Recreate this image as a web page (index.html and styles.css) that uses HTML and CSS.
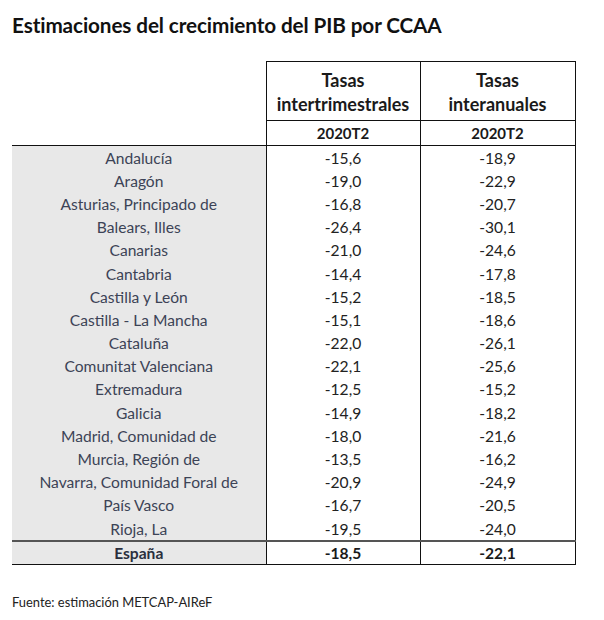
FILE: index.html
```html
<!DOCTYPE html>
<html>
<head>
<meta charset="utf-8">
<link rel="stylesheet" href="styles.css">
</head>
<body>
<h1 class="title">Estimaciones del crecimiento del PIB por CCAA</h1>
<table class="tbl">
  <colgroup><col class="c1"><col class="c2"><col class="c3"></colgroup>
  <thead>
    <tr class="h1row"><th class="blank"></th><th class="hd">Tasas<br>intertrimestrales</th><th class="hd">Tasas<br>interanuales</th></tr>
    <tr class="h2row"><th class="blank"></th><th class="per">2020T2</th><th class="per">2020T2</th></tr>
  </thead>
  <tbody>
    <tr class="first"><td class="reg">Andalucía</td><td>-15,6</td><td>-18,9</td></tr>
    <tr><td class="reg">Aragón</td><td>-19,0</td><td>-22,9</td></tr>
    <tr><td class="reg">Asturias, Principado de</td><td>-16,8</td><td>-20,7</td></tr>
    <tr><td class="reg">Balears, Illes</td><td>-26,4</td><td>-30,1</td></tr>
    <tr><td class="reg">Canarias</td><td>-21,0</td><td>-24,6</td></tr>
    <tr><td class="reg">Cantabria</td><td>-14,4</td><td>-17,8</td></tr>
    <tr><td class="reg">Castilla y León</td><td>-15,2</td><td>-18,5</td></tr>
    <tr><td class="reg">Castilla - La Mancha</td><td>-15,1</td><td>-18,6</td></tr>
    <tr><td class="reg">Cataluña</td><td>-22,0</td><td>-26,1</td></tr>
    <tr><td class="reg">Comunitat Valenciana</td><td>-22,1</td><td>-25,6</td></tr>
    <tr><td class="reg">Extremadura</td><td>-12,5</td><td>-15,2</td></tr>
    <tr><td class="reg">Galicia</td><td>-14,9</td><td>-18,2</td></tr>
    <tr><td class="reg">Madrid, Comunidad de</td><td>-18,0</td><td>-21,6</td></tr>
    <tr><td class="reg">Murcia, Región de</td><td>-13,5</td><td>-16,2</td></tr>
    <tr><td class="reg">Navarra, Comunidad Foral de</td><td>-20,9</td><td>-24,9</td></tr>
    <tr><td class="reg">País Vasco</td><td>-16,7</td><td>-20,5</td></tr>
    <tr><td class="reg">Rioja, La</td><td>-19,5</td><td>-24,0</td></tr>
    <tr class="total"><td class="reg">España</td><td>-18,5</td><td>-22,1</td></tr>
  </tbody>
</table>
<p class="src">Fuente: estimación METCAP-AIReF</p>
</body>
</html>
```
FILE: styles.css
```css
html, body {
  margin: 0;
  padding: 0;
  background: #fff;
}
body {
  font-family: Lato, "Open Sans", sans-serif;
  color: #222;
  padding: 0 0 0 12px;
}
.title {
  margin: 0;
  padding-top: 12px;
  height: 61px;
  box-sizing: border-box;
  font-size: 20.7px;
  font-weight: 700;
  color: #111;
  letter-spacing: -0.1px;
  line-height: 26px;
  white-space: nowrap;
}
.tbl {
  border-collapse: collapse;
  table-layout: fixed;
  width: 563px;
}
.c1 { width: 254px; }
.c2 { width: 154px; }
.c3 { width: 155px; }
.tbl th, .tbl td {
  padding: 0;
  text-align: center;
}
.h1row th.hd {
  height: 59px;
  font-size: 18px;
  font-weight: 700;
  line-height: 24px;
  color: #1a1a1a;
  border: 1px solid #111;
  padding-top: 2px;
  box-sizing: border-box;
}
.h2row th.per {
  height: 24px;
  font-size: 15px;
  font-weight: 700;
  color: #1a1a1a;
  border: 1px solid #111;
}
.blank {
  border: none;
  border-right: 1px solid #111;
}
.tbl td {
  height: 23.2px;
  font-size: 15.6px;
  line-height: 18px;
  color: #222;
  border-left: 1px solid #111;
  border-right: 1px solid #111;
}
.tbl td.reg {
  background: #e8e8e8;
  color: #3c4356;
  border-left: none;
}
.tbl tr.first td {
  border-top: 1px solid #111;
}
.tbl tr.total td {
  border-top: 2px solid #555;
  border-bottom: 1px solid #111;
  font-weight: 700;
  color: #1a1a1a;
  height: 22px;
}
.tbl tr.total td.reg {
  color: #2a2f3d;
}
.src {
  margin: 29px 0 0;
  font-size: 12.9px;
  color: #222;
}
```
